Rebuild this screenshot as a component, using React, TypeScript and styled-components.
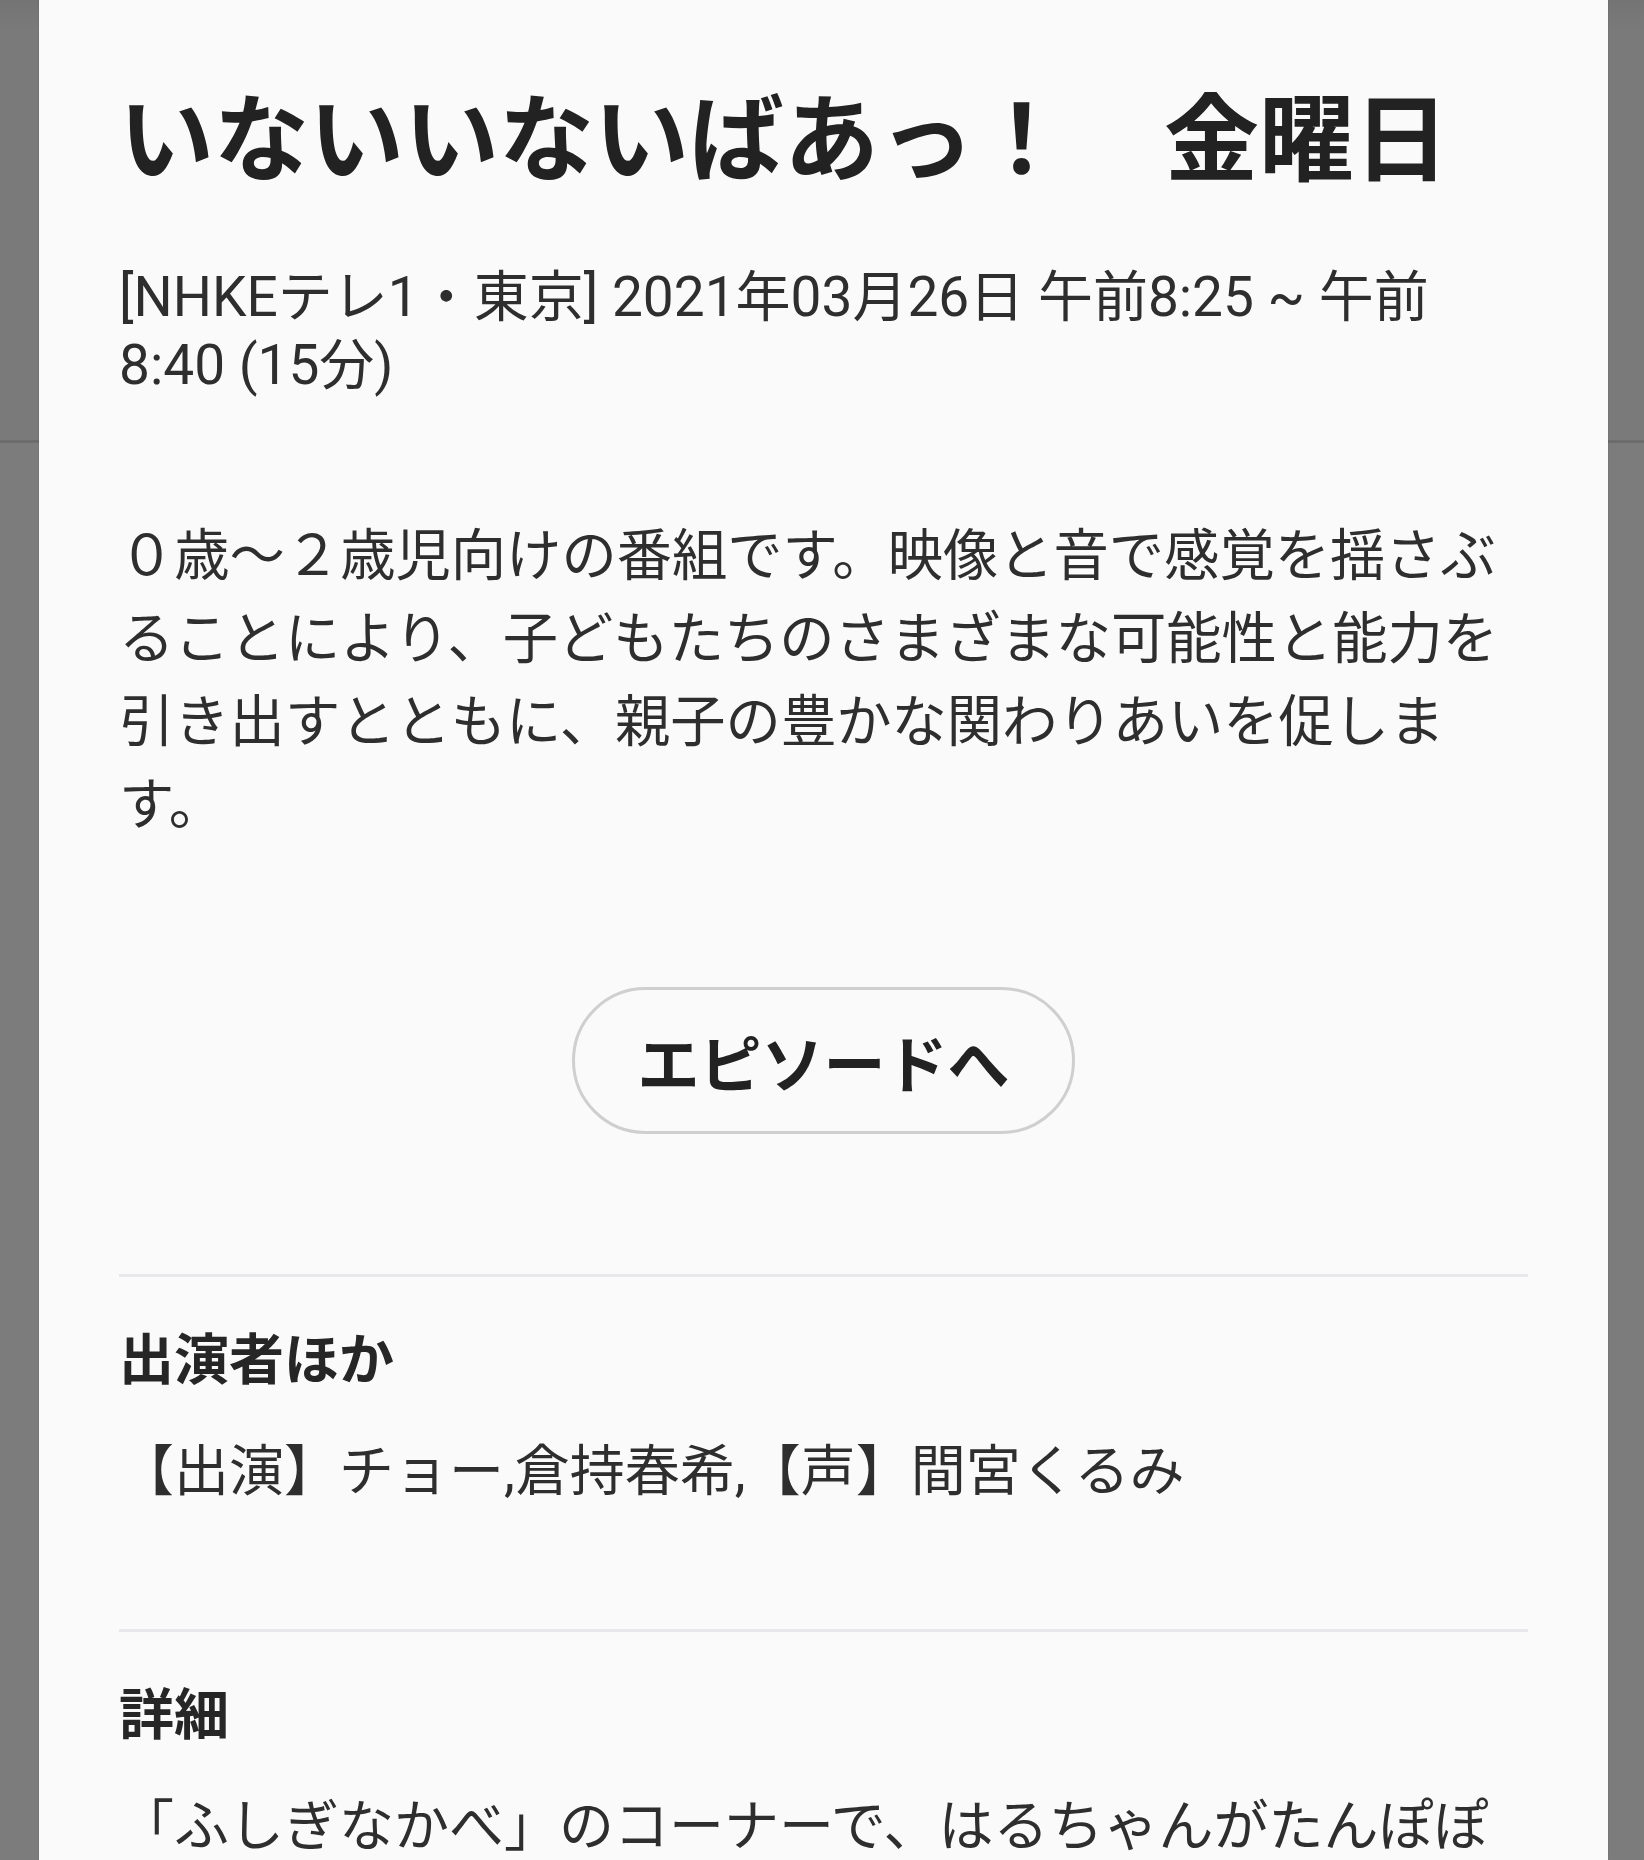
import styled, { createGlobalStyle } from "styled-components";

const GlobalStyle = createGlobalStyle`
  html, body {
    margin: 0;
    padding: 0;
    background: #7a7a7a;
  }
  * {
    box-sizing: border-box;
  }
`;

const program = {
  title: "いないいないばあっ！　金曜日",
  meta: "[NHKEテレ1・東京] 2021年03月26日 午前8:25 ~ 午前8:40 (15分)",
  description:
    "０歳～２歳児向けの番組です。映像と音で感覚を揺さぶることにより、子どもたちのさまざまな可能性と能力を引き出すとともに、親子の豊かな関わりあいを促します。",
  sections: [
    {
      heading: "出演者ほか",
      body: "【出演】チョー,倉持春希,【声】間宮くるみ",
    },
    {
      heading: "詳細",
      body: "「ふしぎなかべ」のコーナーで、はるちゃんがたんぽぽのわたげを見つけます。ワンワン、うーたんといっしょに歌って踊りましょう。",
    },
  ],
};

function App() {
  return (
    <>
      <GlobalStyle />
      <Page>
        <Sheet>
          <Title>{program.title}</Title>
          <Meta>{program.meta}</Meta>
          <Description>{program.description}</Description>
          <ButtonRow>
            <EpisodeButton type="button">エピソードへ</EpisodeButton>
          </ButtonRow>
          {program.sections.map((section) => (
            <Section key={section.heading}>
              <SectionHeading>{section.heading}</SectionHeading>
              <SectionBody>{section.body}</SectionBody>
            </Section>
          ))}
        </Sheet>
      </Page>
    </>
  );
}

export default App;

const Page = styled.div`
  display: flex;
  height: 1860px;
  overflow: hidden;
  padding: 0 36px 0 39px;
  background:
    linear-gradient(
      to bottom,
      #747474 0,
      #7a7a7a 30px,
      #7a7a7a 440px,
      #6c6c6c 440px,
      #6c6c6c 443px,
      #7c7c7c 443px
    );
`;

const Sheet = styled.div`
  flex: 1;
  background: #fafafa;
  padding: 87px 80px 0 80px;
  font-family: Roboto, "Noto Sans CJK JP", sans-serif;
  color: #2e2e2e;
  box-shadow: 0 0 2px rgba(0, 0, 0, 0.15);
`;

const Title = styled.h1`
  margin: 0;
  font-size: 95px;
  line-height: 110px;
  font-weight: 700;
  color: #222;
  white-space: pre;
`;

const Meta = styled.p`
  margin: 66px 0 0;
  font-size: 55px;
  line-height: 68px;
  font-weight: 400;
`;

const Description = styled.p`
  margin: 116px 0 0;
  font-size: 55.3px;
  line-height: 83px;
`;

const ButtonRow = styled.div`
  display: flex;
  justify-content: center;
  margin-top: 140px;
`;

const EpisodeButton = styled.button`
  height: 147px;
  padding: 0 62px;
  border: 3px solid #cfcfcf;
  border-radius: 74px;
  background: transparent;
  font-family: "Noto Sans CJK JP", sans-serif;
  font-size: 62px;
  font-weight: 700;
  color: #222;
`;

const Section = styled.section`
  border-top: 3px solid #e8e8ea;
  padding: 42px 0 116px;

  &:first-of-type {
    margin-top: 140px;
  }
`;

const SectionHeading = styled.h2`
  margin: 0;
  font-size: 55px;
  line-height: 83px;
  font-weight: 700;
  color: #262626;
`;

const SectionBody = styled.p`
  margin: 28px 0 0;
  font-size: 55px;
  line-height: 83px;
`;
